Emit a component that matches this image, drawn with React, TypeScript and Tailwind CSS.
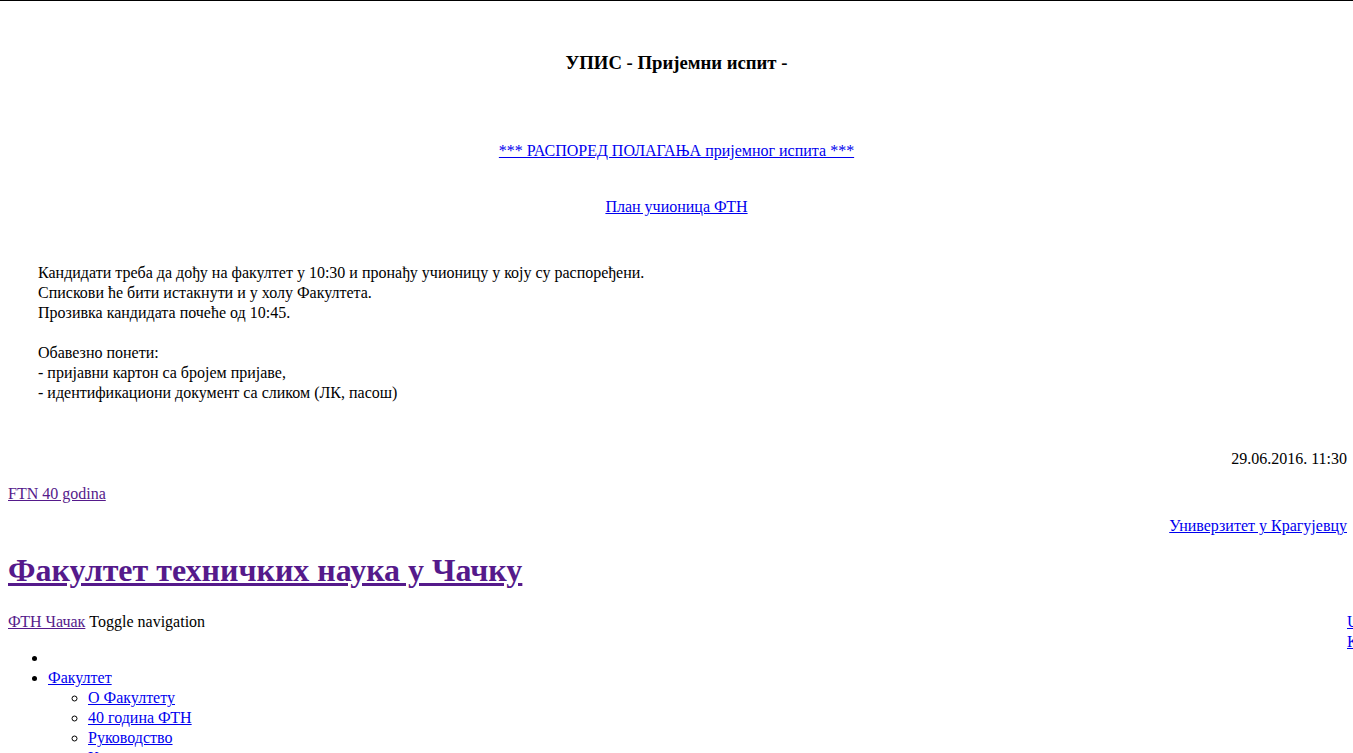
const blue = 'text-[#0000ee] underline';
const purple = 'text-[#551a8b] underline';

export default function App() {
  return (
    <div className="h-[753px] overflow-hidden border-t border-black bg-white font-['Liberation_Serif',serif] text-[16px] leading-[20px] text-black">
      <div className="px-2">
        <h3 className="pt-[51px] text-center text-[18.72px] font-bold leading-[22px]">
          УПИС - Пријемни испит -
        </h3>

        <div className="mt-[67px] text-center">
          <a href="#" className={blue}>
            *** РАСПОРЕД ПОЛАГАЊА пријемног испита ***
          </a>
        </div>

        <div className="mt-[36px] text-center">
          <a href="#" className={blue}>
            План учионица ФТН
          </a>
        </div>

        <div className="mt-[46px] pl-[30px]">
          <div>Кандидати треба да дођу на факултет у 10:30 и пронађу учионицу у коју су распоређени.</div>
          <div>Спискови ће бити истакнути и у холу Факултета.</div>
          <div>Прозивка кандидата почеће од 10:45.</div>
          <div className="h-5" />
          <div>Обавезно понети:</div>
          <div>- пријавни картон са бројем пријаве,</div>
          <div>- идентификациони документ са сликом (ЛК, пасош)</div>
        </div>

        <div className="mt-[46px] -mr-0.5 text-right">29.06.2016. 11:30</div>

        <div className="mt-[15px]">
          <a href="#" className={purple}>
            FTN 40 godina
          </a>
        </div>

        <div className="mt-3 -mr-0.5 text-right">
          <a href="#" className={blue}>
            Универзитет у Крагујевцу
          </a>
        </div>

        <h1 className="mt-[15px] text-[32px] font-bold leading-[38px]">
          <a href="#" className={purple}>
            Факултет техничких наука у Чачку
          </a>
        </h1>
      </div>

      <div className="mt-[23px] flex h-5 pl-2">
        <div className="flex-1">
          <a href="#" className={purple}>
            ФТН Чачак
          </a>{' '}
          Toggle navigation
        </div>
        <div className="w-[6px] shrink-0 whitespace-nowrap">
          <div>
            <a href="#" className={blue}>
              Univerzitet u
            </a>
          </div>
          <div>
            <a href="#" className={blue}>
              Kragujevcu
            </a>
          </div>
        </div>
      </div>

      <ul className="mt-4 list-disc pl-12">
        <li className="h-5"></li>
        <li>
          <a href="#" className={blue}>
            Факултет
          </a>
          <ul className="list-[circle] pl-10">
            <li>
              <a href="#" className={blue}>
                О Факултету
              </a>
            </li>
            <li>
              <a href="#" className={blue}>
                40 година ФТН
              </a>
            </li>
            <li>
              <a href="#" className={blue}>
                Руководство
              </a>
            </li>
            <li>
              <a href="#" className={blue}>
                Катедре
              </a>
            </li>
            <li>
              <a href="#" className={blue}>
                Запослени
              </a>
            </li>
          </ul>
        </li>
      </ul>
    </div>
  );
}
